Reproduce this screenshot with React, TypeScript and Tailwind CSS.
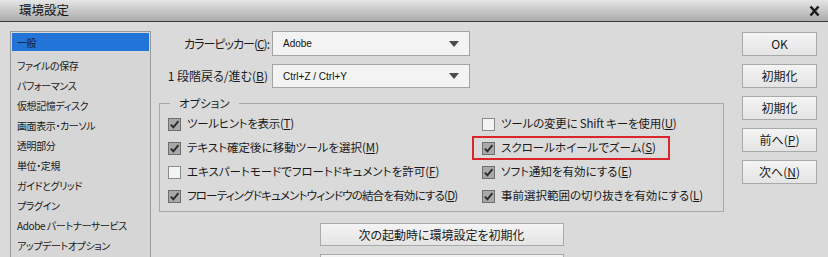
import React from "react";

const FONT = "font-['Noto_Sans_CJK_JP','Noto_Sans',sans-serif] [font-feature-settings:'palt']";

function Check({ checked }: { checked: boolean }) {
  return (
    <span
      className={
        "w-[13px] h-[13px] shrink-0 border flex items-center justify-center " +
        (checked ? "bg-[#a9a9a9] border-[#6e6e6e]" : "bg-[#f4f4f4] border-[#8a8a8a]")
      }
    >
      {checked && (
        <svg width="11" height="11" viewBox="0 0 11 11">
          <path d="M1.8 5.6 L4.4 8.3 L9.4 2.2" fill="none" stroke="#2e2e2e" strokeWidth="2" />
        </svg>
      )}
    </span>
  );
}

function Opt({ checked, text, k, tight }: { checked: boolean; text: string; k: string; tight?: string }) {
  return (
    <div className={"h-[24px] flex items-center gap-[6px] text-[11.5px] text-[#1a1a1a] whitespace-nowrap " + (tight ?? "")}>
      <Check checked={checked} />
      <span>
        {text}(<span className="underline">{k}</span>)
      </span>
    </div>
  );
}

function Select({ value, h }: { value: string; h: string }) {
  return (
    <div
      className={
        "w-[198px] " +
        h +
        " bg-[#f3f3f3] border border-[#a3a3a3] flex items-center justify-between pl-[10px] pr-[10px] text-[10px] text-[#111] font-['Liberation_Sans',sans-serif]"
      }
    >
      <span>{value}</span>
      <svg width="10" height="6" viewBox="0 0 10 6">
        <path d="M0 0 H10 L5 6 Z" fill="#4a4a4a" />
      </svg>
    </div>
  );
}

function Btn({ children }: { children: React.ReactNode }) {
  return (
    <div className="w-[75px] h-[24px] bg-gradient-to-b from-[#f4f4f4] to-[#e4e4e4] border border-[#a9a9a9] flex items-center justify-center text-[12px] text-[#1a1a1a]">
      {children}
    </div>
  );
}

const items = [
  "ファイルの保存",
  "パフォーマンス",
  "仮想記憶ディスク",
  "画面表示・カーソル",
  "透明部分",
  "単位・定規",
  "ガイドとグリッド",
  "プラグイン",
  "Adobe パートナーサービス",
  "アップデートオプション",
];

export default function App() {
  return (
    <div className={"w-[828px] h-[257px] overflow-hidden bg-[#dadada] flex flex-col " + FONT}>
      <div className="h-[22px] shrink-0 bg-gradient-to-b from-[#e6e6e6] via-[#c8c8c8] to-[#acacac] border-b border-[#3c3c3c] flex items-center justify-between pl-[19px] pr-[8px]">
        <span className="text-[12.5px] text-[#111]">環境設定</span>
        <svg width="11" height="12" viewBox="0 0 11 12">
          <path d="M1.5 1.5 L9.5 10.5 M9.5 1.5 L1.5 10.5" stroke="#1e1e1e" strokeWidth="2.6" />
        </svg>
      </div>
      <div className="flex flex-1 pt-[9px]">
        <div className="ml-[10px] w-[141px] h-[240px] shrink-0 border border-[#9a9a9a] bg-[#d6d6d6] pt-[1px] px-[1px] text-[10px] tracking-[-0.4px] text-[#1a1a1a]">
          <div className="h-[18px] bg-[#2274d9] flex items-center pl-[5px] mb-[4px]">一般</div>
          {items.map((t) => (
            <div key={t} className="h-[20px] flex items-center pl-[5px] whitespace-nowrap">
              {t}
            </div>
          ))}
        </div>
        <div className="ml-[8px] w-[565px] shrink-0 flex flex-col">
          <div className="flex items-center">
            <div className="w-[113px] pr-[3px] text-right text-[12px] tracking-[-1px] text-[#1a1a1a] whitespace-nowrap">
              カラーピッカー(<span className="underline">C</span>):
            </div>
            <Select value="Adobe" h="h-[25px]" />
          </div>
          <div className="flex items-center mt-[8px]">
            <div className="w-[113px] pr-[4px] text-right text-[12px] text-[#1a1a1a] whitespace-nowrap">
              1 段階戻る/進む(<span className="underline">B</span>)
            </div>
            <Select value="Ctrl+Z / Ctrl+Y" h="h-[24px]" />
          </div>
          <fieldset className="mt-[8px] border border-[#a8a8a8] w-[565px]">
            <legend className="ml-[10px] px-[9px] text-[11.5px] text-[#1a1a1a] leading-[14px]">オプション</legend>
            <div className="grid grid-cols-[314px_1fr] pl-[8px] pt-[2px] pb-[3px]">
              <div className="flex flex-col">
                <Opt checked text="ツールヒントを表示" k="T" tight="tracking-[-0.3px]" />
                <Opt checked text="テキスト確定後に移動ツールを選択" k="M" />
                <Opt checked={false} text="エキスパートモードでフロートドキュメントを許可" k="F" />
                <Opt checked text="フローティングドキュメントウィンドウの結合を有効にする" k="D" tight="tracking-[-0.8px]" />
              </div>
              <div className="flex flex-col">
                <Opt checked={false} text="ツールの変更に Shift キーを使用" k="U" tight="tracking-[-0.2px]" />
                <div className="-ml-[10px] w-[198px] h-[24px] border-2 border-[#d8262a] pl-[8px] flex items-center">
                  <div className="flex items-center gap-[6px] text-[11.5px] text-[#1a1a1a] whitespace-nowrap">
                    <Check checked />
                    <span>
                      スクロールホイールでズーム(<span className="underline">S</span>)
                    </span>
                  </div>
                </div>
                <Opt checked text="ソフト通知を有効にする" k="E" />
                <Opt checked text="事前選択範囲の切り抜きを有効にする" k="L" />
              </div>
            </div>
          </fieldset>
          <div className="mt-[11px] self-center w-[244px] h-[23px] shrink-0 bg-gradient-to-b from-[#f4f4f4] to-[#e4e4e4] border border-[#a9a9a9] flex items-center justify-center text-[12px] text-[#1a1a1a]">
            次の起動時に環境設定を初期化
          </div>
          <div className="mt-[8px] self-center w-[244px] h-[23px] shrink-0 bg-gradient-to-b from-[#f4f4f4] to-[#e4e4e4] border border-[#a9a9a9]" />
        </div>
        <div className="ml-[18px] flex flex-col gap-[8px] pt-[1px]">
          <Btn>OK</Btn>
          <Btn>初期化</Btn>
          <Btn>初期化</Btn>
          <Btn>
            前へ(<span className="underline">P</span>)
          </Btn>
          <Btn>
            次へ(<span className="underline">N</span>)
          </Btn>
        </div>
      </div>
    </div>
  );
}
